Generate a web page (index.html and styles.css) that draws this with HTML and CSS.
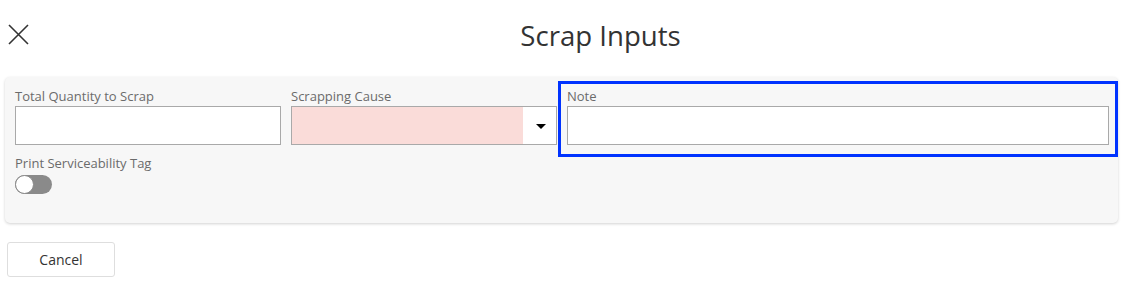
FILE: index.html
```html
<!DOCTYPE html>
<html lang="en">
<head>
  <meta charset="UTF-8" />
  <title>Scrap Inputs</title>
  <link rel="stylesheet" href="styles.css">
</head>
<body>

  <div class="header">
    <button class="close-btn" aria-label="Close">
      <svg width="21" height="21" viewBox="0 0 21 21">
        <path d="M1 1 L20 20 M20 1 L1 20" stroke="#333" stroke-width="1.6" fill="none" />
      </svg>
    </button>
    <h1 class="title">Scrap Inputs</h1>
  </div>

  <div class="panel">
    <div class="row">
      <div class="col col-3">
        <label class="field-label">Total Quantity to Scrap</label>
        <input type="text" class="field-input" />
      </div>
      <div class="col col-3">
        <label class="field-label">Scrapping Cause</label>
        <div class="select">
          <div class="select-value"></div>
          <div class="select-arrow"></div>
        </div>
      </div>
      <div class="col col-6 focused">
        <label class="field-label">Note</label>
        <input type="text" class="field-input" />
      </div>
    </div>
    <div class="row">
      <div class="col col-3 toggle-field">
        <label class="field-label">Print Serviceability Tag</label>
        <div class="toggle"><span class="knob"></span></div>
      </div>
    </div>
  </div>

  <button class="cancel-btn">Cancel</button>

</body>
</html>
```

FILE: styles.css
```css
html, body {
  margin: 0;
  padding: 0;
  font-family: "Open Sans", "Liberation Sans", sans-serif;
  background: #fff;
  color: #333;
}

.header {
  display: flex;
  align-items: center;
  height: 70px;
}

.close-btn {
  width: 38px;
  height: 70px;
  padding: 0 0 2px 8px;
  border: none;
  background: none;
  display: flex;
  align-items: center;
}

.title {
  flex-grow: 1;
  margin: 0;
  padding-left: 36px;
  text-align: center;
  font-size: 27.6px;
  font-weight: normal;
  color: #333;
  line-height: 34px;
}

.panel {
  margin: 7px 9px 0 5px;
  padding: 8px 4px 8px 5px;
  background: #f7f7f7;
  border-radius: 5px;
  box-shadow: 0 1px 3px rgba(0, 0, 0, 0.18);
}

.row {
  display: flex;
}

.col {
  box-sizing: border-box;
  padding: 3px 5px 8px 5px;
}

.col-3 {
  width: 276px;
}

.col-6 {
  width: 552px;
}

.focused {
  outline: 3px solid #0033ff;
  outline-offset: 1px;
}

.field-label {
  display: block;
  font-size: 13px;
  line-height: 17px;
  padding-bottom: 1px;
  color: #6b6b6b;
}

.field-input {
  display: block;
  box-sizing: border-box;
  width: 100%;
  height: 39px;
  margin: 0;
  border: 1px solid #a9a9a9;
  background: #fff;
  font-family: inherit;
  font-size: 14px;
}

.select {
  display: flex;
  box-sizing: border-box;
  height: 39px;
  border: 1px solid #a9a9a9;
  background: #fff;
}

.select-value {
  flex-grow: 1;
  background: #fadcd9;
}

.select-arrow {
  width: 33px;
  display: flex;
  align-items: center;
  justify-content: center;
}

.select-arrow::before {
  content: "";
  border-left: 5.5px solid transparent;
  border-right: 5.5px solid transparent;
  border-top: 5.5px solid #000;
  margin-top: 1px;
  margin-left: 2px;
}

.toggle-field {
  padding-top: 2px;
  padding-bottom: 21px;
}

.toggle {
  width: 37px;
  height: 19px;
  margin-top: 2px;
  border-radius: 10px;
  background: #8a8a8a;
  display: flex;
  align-items: center;
}

.knob {
  box-sizing: border-box;
  width: 19px;
  height: 19px;
  border-radius: 50%;
  background: #fff;
  border: 1px solid #8a8a8a;
}

.cancel-btn {
  display: block;
  margin: 19px 0 0 7px;
  width: 108px;
  height: 35px;
  border: 1px solid #dedede;
  border-radius: 3px;
  background: #fff;
  font-family: inherit;
  font-size: 14px;
  color: #333;
}
```
